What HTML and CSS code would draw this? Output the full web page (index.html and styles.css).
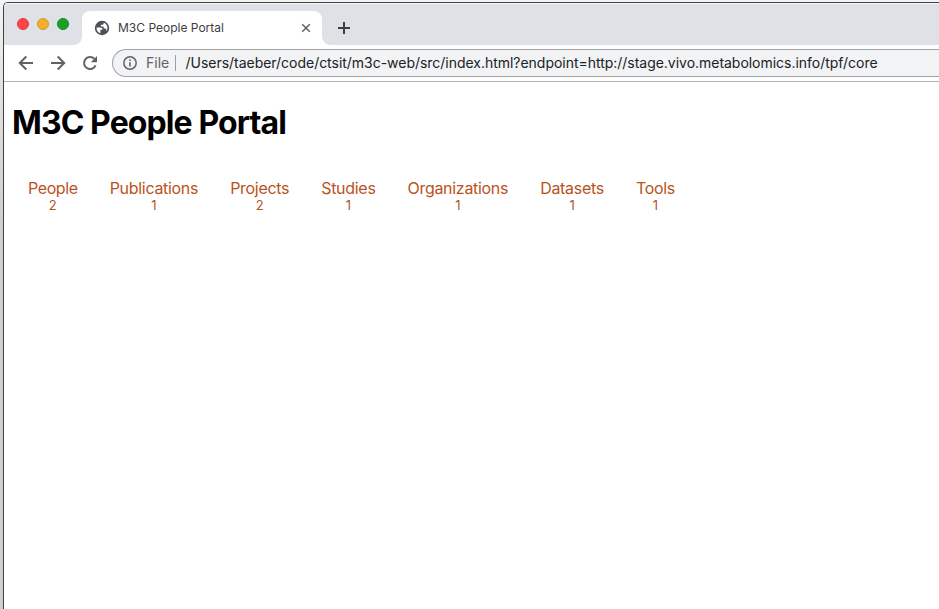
FILE: index.html
```html
<!DOCTYPE html>
<html lang="en">
<head>
<meta charset="utf-8">
<title>M3C People Portal</title>
<link rel="stylesheet" href="styles.css">
</head>
<body>
<div class="window">
  <div class="tabstrip">
    <div class="lights"><i class="light red"></i><i class="light yellow"></i><i class="light green"></i></div>
    <div class="tab">
      <svg class="globe" width="16" height="16" viewBox="0 0 16 16"><circle cx="8" cy="8" r="7.200" fill="#4d5156"/><path d="M2.500 7.600h3.700c1.500 0 2.300.8 2.300 2.200H6.400v3.500C4 12.600 2.400 10.500 2.500 7.600z" fill="#fff"/><path d="M9.600 2.700v.8c0 .8-.6 1.300-1.400 1.300H6.900v1.600h1.500c1 0 1.300.5 1.300 1.300v.9h1.400c.8 0 1.200.5 1.200 1.300v1.300c2.200-2.800 1.300-7.200-2.700-8.500z" fill="#fff"/></svg>
      <span class="tab-title">M3C People Portal</span>
      <svg class="close" width="10" height="10" viewBox="0 0 10 10"><path d="M1.200 1.200l7.600 7.600M8.800 1.200L1.200 8.800" stroke="#5f6368" stroke-width="1.500"/></svg>
    </div>
    <svg class="plus" width="14" height="14" viewBox="0 0 14 14"><path d="M7 1v12M1 7h12" stroke="#3c4043" stroke-width="2"/></svg>
  </div>
  <div class="toolbar">
    <svg class="nav-icon" width="16" height="16" viewBox="0 0 16 16"><path d="M15 8H2.200M8.300 1.500L1.800 8l6.500 6.500" fill="none" stroke="#5f6368" stroke-width="2"/></svg>
    <svg class="nav-icon" width="16" height="16" viewBox="0 0 16 16"><path d="M1 8h12.800M7.700 1.500L14.200 8l-6.500 6.500" fill="none" stroke="#5f6368" stroke-width="2"/></svg>
    <svg class="nav-icon" width="16" height="16" viewBox="0 0 16 16"><path d="M13.600 10.300A6 6 0 1 1 12.300 3.800" fill="none" stroke="#5f6368" stroke-width="2"/><path d="M15 1v6.200H8.800z" fill="#5f6368"/></svg>
    <div class="omnibox">
      <svg class="info" width="14" height="14" viewBox="0 0 14 14"><circle cx="7" cy="7" r="6.200" fill="none" stroke="#5f6368" stroke-width="1.500"/><path d="M7 6.200v4.300M7 3.500v1.500" stroke="#5f6368" stroke-width="1.600"/></svg>
      <span class="scheme">File</span>
      <span class="url">/Users/taeber/code/ctsit/m3c-web/src/index.html?endpoint=http://stage.vivo.metabolomics.info/tpf/core</span>
    </div>
  </div>
  <main class="page">
    <h1>M3C People Portal</h1>
    <nav class="menu">
      <a class="people">People<small>2</small></a>
      <a>Publications<small>1</small></a>
      <a>Projects<small>2</small></a>
      <a>Studies<small>1</small></a>
      <a>Organizations<small>1</small></a>
      <a>Datasets<small>1</small></a>
      <a>Tools<small>1</small></a>
    </nav>
  </main>
</div>
</body>
</html>
```
FILE: styles.css
```css
* { box-sizing: border-box; }
body {
  margin: 0;
  height: 609px;
  padding: 2px 0 0 3px;
  overflow: hidden;
  background: linear-gradient(#f4f4f4, #e2e2e0 80px, #cfcfcd 220px, #cfcfcd);
  font-family: Inter, "Liberation Sans", sans-serif;
}
svg { display: block; flex: none; }
.window {
  height: 607px;
  border: solid #3e3f42;
  border-width: 1px 0 0 1px;
  border-top-left-radius: 5px;
  background: #fff;
  overflow: hidden;
}
.tabstrip {
  display: flex;
  height: 42px;
  background: #dee1e6;
  border-top: 1px solid #f6f7f8;
}
.lights { display: flex; gap: 8px; width: 78px; padding: 14px 0 0 13px; }
.light { width: 12px; height: 12px; border-radius: 50%; border: 1px solid; }
.red { background: #fc4348; border-color: #e0383e; }
.yellow { background: #f4af2d; border-color: #d6962a; }
.green { background: #1c9f28; border-color: #188a22; }
.tab {
  position: relative;
  display: flex;
  align-items: center;
  width: 240px;
  height: 34px;
  margin-top: 7px;
  padding: 0 11px 0 12px;
  border-radius: 8px 8px 0 0;
  background: #fff;
}
.tab::before, .tab::after {
  content: "";
  position: absolute;
  bottom: 0;
  width: 8px;
  height: 8px;
}
.tab::before { left: -8px; background: radial-gradient(circle at 0 0, #dee1e6 7.5px, #fff 8px); }
.tab::after { right: -8px; background: radial-gradient(circle at 100% 0, #dee1e6 7.5px, #fff 8px); }
.tab-title { flex: 1; margin-left: 8px; padding-bottom: 2px; font-size: 12px; color: #3c4043; white-space: nowrap; }
.plus { margin: 17px 0 0 15px; }
.toolbar {
  display: flex;
  align-items: center;
  gap: 16px;
  height: 37px;
  padding-left: 14px;
  border-bottom: 1px solid #b0b1b2;
}
.omnibox {
  display: flex;
  align-items: center;
  flex: 1;
  height: 28px;
  margin-left: -2px;
  padding-left: 10px;
  border: 1px solid #a2a3a5;
  border-right: 0;
  border-radius: 14px 0 0 14px;
  background: #f1f3f4;
  font-size: 14px;
  white-space: nowrap;
}
.scheme { width: 30px; margin-left: 9px; border-right: 1px solid #9aa0a6; line-height: 16px; color: #5f6368; }
.url { margin-left: 9.5px; padding-bottom: 2px; letter-spacing: -0.026px; color: #202124; }
.page { padding: 21px 8px 0; }
h1 { margin: 0; font-size: 32px; line-height: 39px; font-weight: 700; letter-spacing: -0.9px; color: #000; white-space: nowrap; }
.menu { display: flex; gap: 32px; margin: 37px 0 0 16px; }
.menu a { font-size: 16px; line-height: 18px; letter-spacing: -0.3px; color: #b9531c; white-space: nowrap; text-align: center; }
.menu .people { letter-spacing: -0.4px; }
.menu small { display: block; font-size: 13px; line-height: 16px; letter-spacing: 0; }
```
